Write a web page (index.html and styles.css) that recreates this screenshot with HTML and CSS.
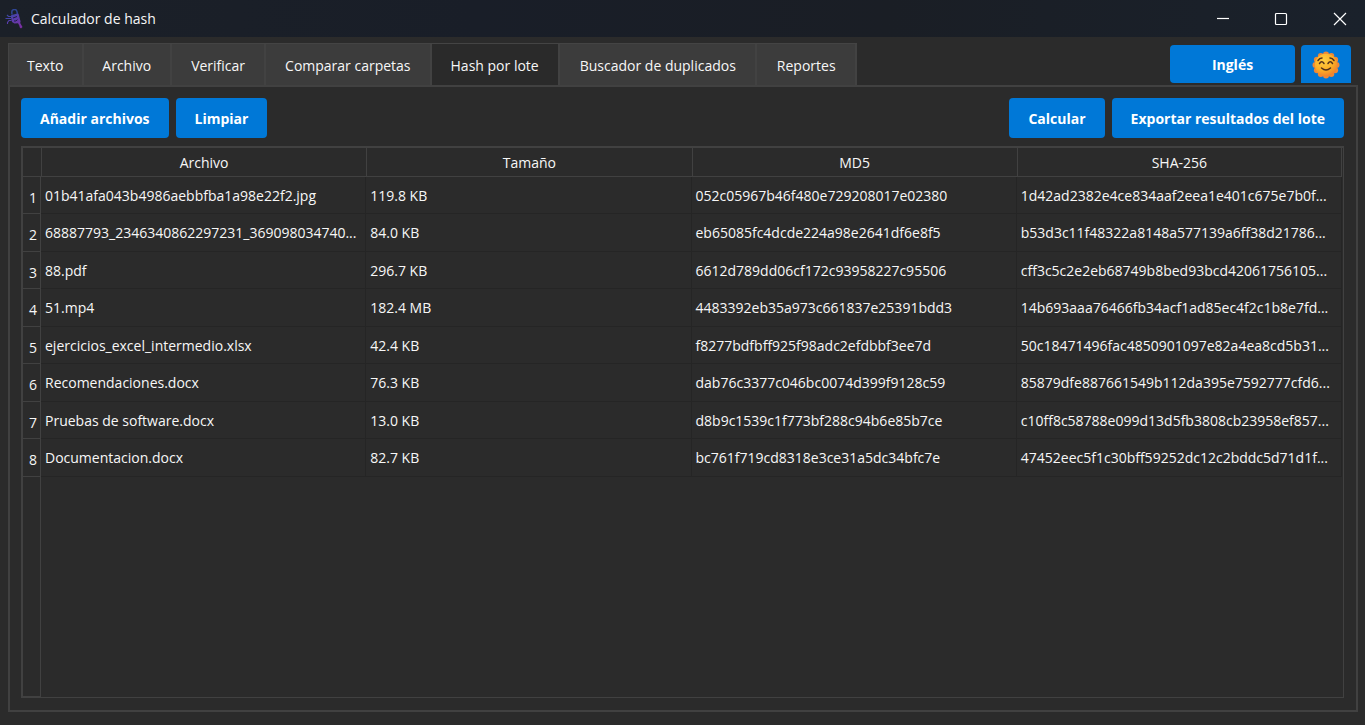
FILE: index.html
```html
<!DOCTYPE html>
<html lang="es">
<head>
<meta charset="utf-8">
<title>Calculador de hash</title>
<link rel="stylesheet" href="styles.css">
</head>
<body>
<div class="window">
  <header class="titlebar">
    <svg class="logo" viewBox="0 0 18 20" width="18" height="20" fill="none" aria-hidden="true">
      <defs>
        <linearGradient id="ink" gradientUnits="userSpaceOnUse" x1="4" y1="2" x2="14" y2="19">
          <stop offset="0" stop-color="#2f4fa6"/>
          <stop offset="0.5" stop-color="#5a3cab"/>
          <stop offset="1" stop-color="#7b2fa3"/>
        </linearGradient>
      </defs>
      <path d="M7 5.500 6.800 3.200a2.600 2.600 0 0 1 5.100-.8L12.500 5" stroke="#2f4696" stroke-width="1.500"/>
      <path d="M6.500 6 12.500 4.500a1 1 0 0 1 1.200.7L15 10.500a3.500 3.500 0 0 1 .2 3.500l2.300 4-1.500 1.500-1.200-1-.5-2-1.300-2.300-3.500.3-2.500-1.500L5.700 7z" fill="url(#ink)"/>
      <path d="M8 9l4-1.500M9 12q2 .5 3.500-1.300" stroke="#1f1c42" stroke-width="1"/>
      <path d="M6 7.500H3.500L2 6M6 9.500H.5M6.500 11.500H4L2.500 13.500V15" stroke="url(#ink)" stroke-width="1.100"/>
    </svg>
    <h1 class="title">Calculador de hash</h1>
    <div class="controls">
      <button class="control" aria-label="Minimizar"><svg viewBox="0 0 14 14" width="14" height="14"><path d="M1 6.500h12"/></svg></button>
      <button class="control" aria-label="Maximizar"><svg viewBox="0 0 14 14" width="14" height="14"><rect x="1.500" y="1.500" width="11" height="11" rx="1"/></svg></button>
      <button class="control" aria-label="Cerrar"><svg viewBox="0 0 14 14" width="14" height="14"><path d="M1 1l12 12M13 1L1 13"/></svg></button>
    </div>
  </header>

  <main class="content">
    <div class="topbar">
      <div class="tabs" role="tablist">
        <button class="tab" role="tab" aria-selected="false">Texto</button>
        <button class="tab" role="tab" aria-selected="false">Archivo</button>
        <button class="tab" role="tab" aria-selected="false">Verificar</button>
        <button class="tab" role="tab" aria-selected="false">Comparar carpetas</button>
        <button class="tab active" role="tab" aria-selected="true">Hash por lote</button>
        <button class="tab" role="tab" aria-selected="false">Buscador de duplicados</button>
        <button class="tab" role="tab" aria-selected="false">Reportes</button>
      </div>
      <div class="corner">
        <button class="button language">Inglés</button>
        <button class="button theme" aria-label="Cambiar tema">
          <svg viewBox="0 0 28 28" width="28" height="28" aria-hidden="true">
            <defs>
              <radialGradient id="sun" cx="0.4" cy="0.3" r="0.75">
                <stop offset="0" stop-color="#ffd044"/>
                <stop offset="0.6" stop-color="#fbae25"/>
                <stop offset="1" stop-color="#ee7b2c"/>
              </radialGradient>
            </defs>
            <g fill="#ee8836">
              <circle cx="14" cy="3.500" r="3"/><circle cx="19.300" cy="4.900" r="3"/><circle cx="23.100" cy="8.800" r="3"/>
              <circle cx="24.500" cy="14" r="3"/><circle cx="23.100" cy="19.300" r="3"/><circle cx="19.300" cy="23.100" r="3"/>
              <circle cx="14" cy="24.500" r="3"/><circle cx="8.800" cy="23.100" r="3"/><circle cx="4.900" cy="19.300" r="3"/>
              <circle cx="3.500" cy="14" r="3"/><circle cx="4.900" cy="8.800" r="3"/><circle cx="8.800" cy="4.900" r="3"/>
            </g>
            <circle cx="14" cy="14" r="11.200" fill="url(#sun)"/>
            <g fill="none" stroke="#51301c" stroke-width="1.500" stroke-linecap="round">
              <path d="M6 9.500q1.500-2.500 4-2.500M18 7q2.500 0 4 2.500"/>
              <path d="M7.500 12.500q2.200-3.500 4.500 0M16 12.500q2.300-3.500 4.500 0"/>
              <path d="M9.500 17q4.500 4 9 0"/>
            </g>
          </svg>
        </button>
      </div>
    </div>

    <section class="panel" role="tabpanel">
      <div class="toolbar">
        <button class="button">Añadir archivos</button>
        <button class="button">Limpiar</button>
        <span class="spacer"></span>
        <button class="button">Calcular</button>
        <button class="button">Exportar resultados del lote</button>
      </div>
      <div class="grid">
        <table class="results">
          <colgroup><col class="col-number"><col><col><col><col></colgroup>
          <thead>
            <tr><td class="corner-cell"></td><th scope="col">Archivo</th><th scope="col">Tamaño</th><th scope="col">MD5</th><th scope="col">SHA-256</th></tr>
          </thead>
          <tbody>
            <tr><th scope="row">1</th><td>01b41afa043b4986aebbfba1a98e22f2.jpg</td><td>119.8 KB</td><td>052c05967b46f480e729208017e02380</td><td>1d42ad2382e4ce834aaf2eea1e401c675e7b0f...</td></tr>
            <tr><th scope="row">2</th><td>68887793_2346340862297231_369098034740...</td><td>84.0 KB</td><td>eb65085fc4dcde224a98e2641df6e8f5</td><td>b53d3c11f48322a8148a577139a6ff38d21786...</td></tr>
            <tr><th scope="row">3</th><td>88.pdf</td><td>296.7 KB</td><td>6612d789dd06cf172c93958227c95506</td><td>cff3c5c2e2eb68749b8bed93bcd42061756105...</td></tr>
            <tr><th scope="row">4</th><td>51.mp4</td><td>182.4 MB</td><td>4483392eb35a973c661837e25391bdd3</td><td>14b693aaa76466fb34acf1ad85ec4f2c1b8e7fd...</td></tr>
            <tr><th scope="row">5</th><td>ejercicios_excel_intermedio.xlsx</td><td>42.4 KB</td><td>f8277bdfbff925f98adc2efdbbf3ee7d</td><td>50c18471496fac4850901097e82a4ea8cd5b31...</td></tr>
            <tr><th scope="row">6</th><td>Recomendaciones.docx</td><td>76.3 KB</td><td>dab76c3377c046bc0074d399f9128c59</td><td>85879dfe887661549b112da395e7592777cfd6...</td></tr>
            <tr><th scope="row">7</th><td>Pruebas de software.docx</td><td>13.0 KB</td><td>d8b9c1539c1f773bf288c94b6e85b7ce</td><td>c10ff8c58788e099d13d5fb3808cb23958ef857...</td></tr>
            <tr><th scope="row">8</th><td>Documentacion.docx</td><td>82.7 KB</td><td>bc761f719cd8318e3ce31a5dc34bfc7e</td><td>47452eec5f1c30bff59252dc12c2bddc5d71d1f...</td></tr>
            <tr class="filler"><td class="gutter"></td><td class="empty" colspan="4"></td></tr>
          </tbody>
        </table>
      </div>
    </section>
  </main>
</div>
</body>
</html>
```
FILE: styles.css
```css
* { box-sizing: border-box; }

body {
  margin: 0;
  background: #2b2b2b;
  color: #f7f7f7;
  font: 14px/20px "Segoe UI", "Open Sans", "Noto Sans", sans-serif;
}

button { font: inherit; color: inherit; border: 0; margin: 0; padding: 0; }

.window { display: flex; flex-direction: column; height: 100vh; }

/* Title bar */
.titlebar {
  display: flex;
  align-items: center;
  flex: none;
  height: 37px;
  padding-left: 5px;
  background: linear-gradient(90deg, #1b2028, #191e28 35%, #1a1e25 65%, #1a212b);
}
.logo { margin-right: 8px; }
.title { margin: 0; font-size: 14px; font-weight: 400; }
.controls { display: flex; align-self: stretch; margin-left: auto; }
.control { display: grid; place-items: center; width: 58px; background: none; }
.control:last-child { width: 50px; margin-left: 5px; }
.control svg { fill: none; stroke: #fff; stroke-width: 1.2; }

/* Tabs and corner buttons */
.content { display: flex; flex-direction: column; flex: 1; min-height: 0; padding: 6px 7px 13px 8px; }
.topbar { display: flex; justify-content: space-between; flex: none; }
.tabs { display: flex; height: 42px; border: solid #444; border-width: 1px 0 0 1px; }
.tab { padding: 2px 19px 0 18px; background: #3c3c3c; border-right: 2px solid #424242; }
.tab:nth-child(n + 3) { padding-left: 19px; }
.tab:nth-child(n + 6) { padding-left: 20px; }
.tab.active { background: #2a2a2a; }
.corner { display: flex; gap: 6px; padding: 2px 7px 2px 0; }

.button {
  height: 40px;
  padding: 2px 19px 0;
  border-radius: 4px;
  background: #0078d7;
  color: #fff;
  font-weight: 700;
}
.language, .theme { height: 38px; padding: 2px 0 0; }
.language { width: 125px; }
.theme { display: grid; place-items: center; width: 50px; border-radius: 4px 4px 0 0; }

/* Panel */
.panel {
  display: flex;
  flex-direction: column;
  flex: 1;
  min-height: 0;
  gap: 8px;
  padding: 11px 12px 12px 11px;
  border: 2px solid #414141;
}
.toolbar { display: flex; gap: 7px; flex: none; }
.spacer { flex: 1; }

/* Results */
.grid { flex: 1; min-height: 0; padding-right: 1px; border: solid #414141; border-width: 2px 1px 1px 2px; }
.results { width: 100%; height: 100%; table-layout: fixed; border-collapse: separate; border-spacing: 0; }
.col-number { width: 18px; }
.results th, .results td { padding: 0; font-weight: 400; white-space: nowrap; }
.results thead tr { height: 29px; }
.results thead th { padding-top: 2px; border: solid #414141; border-width: 0 0 1px 1px; }
.results thead th:last-child { border-right: 1px solid #414141; }
.results .corner-cell { border-bottom: 1px solid #414141; }
.results tbody tr { height: 37px; }
.results tbody tr:nth-child(even) { height: 38px; }
.results tbody th {
  padding: 5px 3px 0 0;
  border: solid #414141;
  border-width: 0 1px 1px 0;
  text-align: right;
}
.results tbody td { padding: 1px 0 0 4px; border: solid #252525; border-width: 0 1px 1px 0; }
.results tbody .filler { height: auto; }
.results tbody .gutter { border: solid #414141; border-width: 0 1px 1px 0; }
.results tbody .empty { border: 0; }
```
